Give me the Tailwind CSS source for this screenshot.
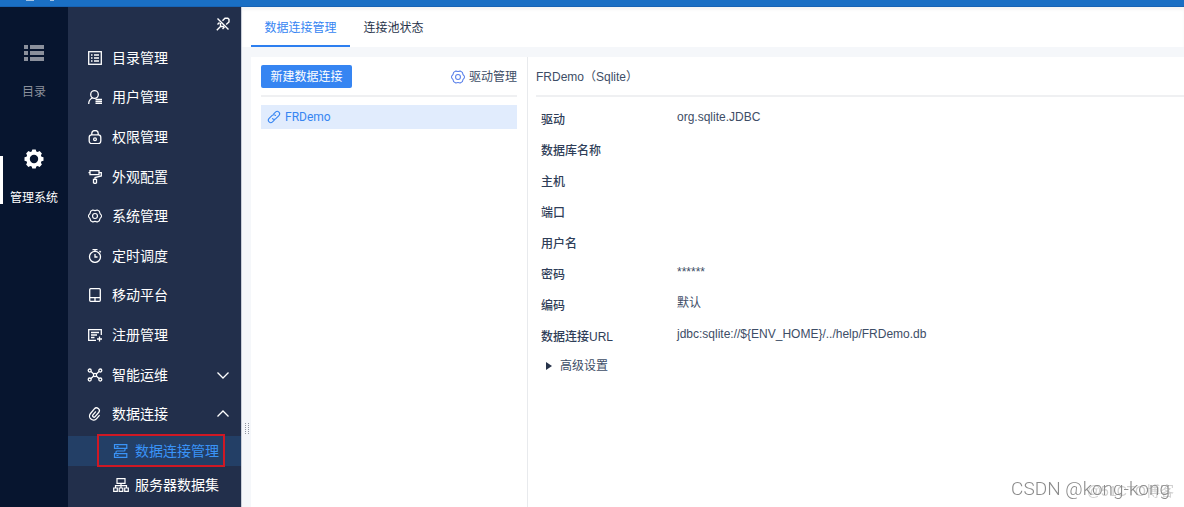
<!DOCTYPE html>
<html lang="zh-CN">
<head>
<meta charset="utf-8">
<title>数据连接管理</title>
<script src="https://cdn.jsdelivr.net/npm/@tailwindcss/browser@4"></script>
</head>
<body class="h-screen overflow-hidden flex flex-col bg-white font-['Liberation_Sans','Noto_Sans_CJK_SC',sans-serif] text-xs text-[#3d4d66]">
<svg class="hidden" aria-hidden="true">
  <symbol id="gear" viewBox="0 0 16 16"><path stroke-linejoin="round" d="M5.500 1.200Q8 2.400 10.500 1.200L13 2.700Q13.300 5.500 15.300 7v2Q13.300 10.500 13 13.300L10.500 14.800Q8 13.600 5.500 14.800L3 13.300Q2.700 10.500.7 9V7Q2.700 5.500 3 2.700z"/><circle cx="8" cy="8" r="2.800"/></symbol>
  <symbol id="clip" viewBox="0 0 14 14"><path transform="rotate(40 7 7)" stroke-linecap="round" d="M11.200 5.500v4a4 4 0 0 1-8 0V3.500a2.800 2.800 0 0 1 5.600 0V9a1.400 1.400 0 0 1-2.800 0V5"/></symbol>
</svg>
<header class="h-[7px] shrink-0 bg-[#1a6fc4] border-b border-[#1763b4] flex gap-2 pl-6"><span class="w-2 h-px ml-0.5 bg-white/60"></span><span class="w-1 h-px ml-2 bg-white/60"></span></header>
<div class="flex flex-1 min-h-0">
  <nav class="w-[68px] shrink-0 bg-[#07152f] flex flex-col" aria-label="主导航">
    <a href="#" class="flex flex-col items-center pt-9 h-[149px] text-[#8b909c]">
      <svg class="w-5 h-5" viewBox="0 0 20 20" fill="currentColor"><path d="M0 2h4v4H0zM6 2h14v4H6zM0 8h4v4H0zM6 8h14v4H6zM0 14h4v4H0zM6 14h14v4H6z"/></svg>
      <span class="mt-5 leading-[18px]">目录</span>
    </a>
    <a href="#" aria-current="page" class="flex flex-col items-center h-12 border-l-[3px] border-white pr-[3px] text-white">
      <svg class="w-5 h-5 -mt-[7px] shrink-0" viewBox="0 0 20 20" fill="currentColor" fill-rule="evenodd"><path d="M8.300.5h3.400l.6 2 1.400.6 1.900-1 2.300 2.300-1 1.900.6 1.400 2 .6v3.400l-2 .6-.6 1.400 1 1.900-2.300 2.300-1.900-1-1.400.6-.6 2H8.300l-.6-2-1.400-.6-1.900 1-2.300-2.300 1-1.900-.6-1.400-2-.6V8.300l2-.6.6-1.400-1-1.900L4.400 2.100l1.900 1 1.400-.6zM10 5.800a4.200 4.200 0 1 0 0 8.400 4.200 4.200 0 0 0 0-8.400z"/></svg>
      <span class="mt-5 leading-[18px] whitespace-nowrap">管理系统</span>
    </a>
  </nav>
  <aside class="w-[173px] shrink-0 bg-[#222f4b] text-white text-sm flex flex-col">
    <div class="h-[31px] shrink-0 flex justify-end pr-[11px] pt-2.5">
      <button aria-label="取消固定" class="w-3.5 h-3.5"><svg class="w-3.5 h-3.5" viewBox="0 0 14 14" fill="none" stroke="currentColor" stroke-width="1.400"><path d="M1.500 1.500l11 11M6.500 3.800L9 1.200h2.800l1.200 1.200v2.600L10.200 7.500M3.500 5.500L1.500 7.500M6.500 12l2-2M4 10L.8 13.200M4.500 6v3.500H8"/></svg></button>
    </div>
    <ul class="grid grid-rows-10 h-[396px] shrink-0 [&>li>a]:flex [&>li>a]:items-center [&>li>a]:h-full [&>li>a]:pl-5 [&>li>a]:pr-[11px] [&>li>a]:gap-[10px] [&_svg]:w-3.5 [&_svg]:h-3.5 [&_svg]:shrink-0 [&_svg]:fill-none [&_svg]:stroke-current [&_svg]:stroke-[1.300]">
      <li><a href="#"><svg viewBox="0 0 14 14"><rect x=".7" y=".7" width="12.600" height="12.600"/><path d="M3 4h1.500M6 4h5M3 7h1.500M6 7h5M3 10h1.500M6 10h5"/></svg>目录管理</a></li>
      <li><a href="#"><svg viewBox="0 0 14 14"><circle cx="6.500" cy="4.500" r="3.800"/><path d="M.7 14c0-3 1.300-5 3.800-6M7.500 9.500H14M7.500 11.500H14M7.500 13.500H14"/></svg>用户管理</a></li>
      <li><a href="#"><svg viewBox="0 0 14 14"><rect x="1.200" y="4.900" width="11.600" height="8.700" rx="2.500"/><path d="M3.800 5V3.200a3.200 2.700 0 0 1 6.400 0V5"/><circle cx="7" cy="9.300" r="1.400"/></svg>权限管理</a></li>
      <li><a href="#"><svg viewBox="0 0 14 14"><path d="M2 .7h9v4H2zM2 2.700H.5M11 2.700h2.300V6L7 7.500V9M5.500 9.300h3v3.500L7 13.600l-1.500-.8z"/></svg>外观配置</a></li>
      <li><a href="#"><svg><use href="#gear"/></svg>系统管理</a></li>
      <li><a href="#"><svg viewBox="0 0 14 14"><circle cx="7" cy="7.900" r="5.500"/><path d="M4.500.7h5M7 .7v2M7 5v3h2.500M11.500 2l1.300 1.300"/></svg>定时调度</a></li>
      <li><a href="#"><svg viewBox="0 0 14 14"><rect x="1.700" y=".7" width="10.600" height="12.600" rx="1"/><path d="M2 9.700h10M7 10v3"/></svg>移动平台</a></li>
      <li><a href="#"><svg viewBox="0 0 14 14"><path d="M13.300 7V1.700H.7v10.600H8M3 4.500h8M3 7h6M3 9.500h3.500M11.500 8.500v5M9 11h5"/></svg>注册管理</a></li>
      <li><a href="#"><svg class="overflow-visible" viewBox="0 0 14 14"><circle cx="1.700" cy="2.500" r="1.500"/><circle cx="12.300" cy="2.500" r="1.500"/><circle cx="1.700" cy="11.500" r="1.500"/><circle cx="12.300" cy="11.500" r="1.500"/><circle cx="7" cy="7" r="1.600"/><path d="M3 3.500L5.700 6M11 3.500L8.300 6M3 10.500L5.700 8M11 10.500L8.300 8"/></svg><span class="flex-1">智能运维</span><svg viewBox="0 0 14 14"><path d="M1.500 4.500L7 10l5.500-5.500"/></svg></a></li>
      <li><a href="#"><svg class="overflow-visible"><use href="#clip"/></svg><span class="flex-1">数据连接</span><svg viewBox="0 0 14 14"><path d="M1.500 9.500L7 4l5.500 5.500"/></svg></a></li>
    </ul>
    <ul class="flex flex-col gap-1 pt-0.5 [&_a]:flex [&_a]:items-center [&_a]:h-[30px] [&_a]:pl-[45px] [&_a]:gap-[6px] [&_svg]:w-4 [&_svg]:h-3.5 [&_svg]:shrink-0 [&_svg]:fill-none [&_svg]:stroke-current [&_svg]:stroke-[1.200]">
      <li class="relative bg-[#233f66] text-[#3a94f8]"><a href="#" aria-current="page"><svg viewBox="0 0 16 14"><path d="M1.500.7h12.300v3.700H1.500zM3.500 2.600h2M1.500 9.600h12.300v3.700H1.500zM3.500 11.500h2M12 4.500v1.500q0 1-1 1H4q-1 0-1 1v1.500"/></svg>数据连接管理</a>
        <span class="absolute left-[29px] -top-0.5 w-32 h-[33px] border-2 border-[#cf1824] pointer-events-none"></span></li>
      <li><a href="#"><svg viewBox="0 0 16 14"><path d="M4 .7h8v4.600H4zM8 5.300V10M2.500 10V7.700h11V10M.7 10h3.600v3.300H.7zM6.200 10h3.600v3.300H6.200zM11.700 10h3.600v3.300h-3.600z"/></svg>服务器数据集</a></li>
    </ul>
  </aside>
  <main class="flex-1 min-w-0 bg-[#f5f7fa] border-l border-[#c9ced8] flex flex-col">
    <div role="tablist" class="h-10 shrink-0 bg-white flex pl-[9px] shadow-[inset_0_3px_3px_#f5f5f5]">
      <button role="tab" aria-selected="true" class="w-[99px] border-b-2 border-[#2d7ff0] text-[#3685f2] pt-1">数据连接管理</button>
      <button role="tab" aria-selected="false" class="w-[87px] text-[#27334a] pt-0.5">连接池状态</button>
    </div>
    <div class="flex flex-1 min-h-0 mt-2.5">
      <div class="w-[9px] shrink-0 relative" aria-hidden="true"><svg class="absolute left-0.5 top-[366px] w-1.5 h-3" viewBox="0 0 6 12" stroke="#8f95a1" stroke-width="1" stroke-dasharray="1 1" shape-rendering="crispEdges"><path d="M1.500 0v12M4.500 0v12"/></svg></div>
      <section class="w-[277px] shrink-0 bg-white border-r border-[#e8eaed] px-2.5 pt-2">
        <div class="h-8 flex items-start justify-between border-b-2 border-[#eff0f2]">
          <button class="h-[23px] w-[91px] rounded-xs bg-[#3685f2] text-white">新建数据连接</button>
          <button class="h-[23px] flex items-center gap-1 text-[#3d4d66]"><svg class="w-3.5 h-3.5 fill-none stroke-[#5a80ea] stroke-[1.200]"><use href="#gear"/></svg>驱动管理</button>
        </div>
        <a href="#" class="mt-2 h-6 flex items-center gap-1 pl-1.5 bg-[#e1ecfd] text-[#3685f2] font-[Roboto]"><svg class="w-3.5 h-3.5" viewBox="0 0 14 14" fill="none" stroke="currentColor" stroke-width="1.100" stroke-linecap="round"><path transform="rotate(45 7 7)" d="M7 9.200a2.400 2.400 0 0 0 2.400-2.400V2.500a2.400 2.400 0 0 0-4.800 0V5M7 4.800a2.400 2.400 0 0 0-2.400 2.400v4.300a2.400 2.400 0 0 0 4.800 0V9"/></svg>FRDemo</a>
      </section>
      <section class="flex-1 min-w-0 bg-white pl-2">
        <h1 class="h-10 leading-10 border-b-2 border-[#eff0f2]">FRDemo（Sqlite）</h1>
        <dl class="grid grid-cols-[136px_1fr] auto-rows-[31px] pl-[5px] pt-[7px] [&>dt]:leading-8 [&>dt]:font-medium [&>dt]:text-[#2f3e58] [&>dd]:leading-[26px]">
          <dt>驱动</dt><dd>org.sqlite.JDBC</dd>
          <dt>数据库名称</dt><dd></dd>
          <dt>主机</dt><dd></dd>
          <dt>端口</dt><dd></dd>
          <dt>用户名</dt><dd></dd>
          <dt>密码</dt><dd>******</dd>
          <dt>编码</dt><dd>默认</dd>
          <dt>数据连接URL</dt><dd>jdbc:sqlite://${ENV_HOME}/../help/FRDemo.db</dd>
        </dl>
        <button aria-expanded="false" class="flex items-center gap-2 h-7 pl-2.5"><svg class="w-1.5 h-2 fill-[#27334a]" viewBox="0 0 6 8"><path d="M0 0l6 4-6 4z"/></svg>高级设置</button>
      </section>
    </div>
  </main>
</div>
<div class="fixed right-2.5 bottom-1.5 text-sm text-[#d0d0d0] whitespace-nowrap">@51CTO博客</div>
<div class="fixed right-3.5 bottom-1.5 text-[19px] leading-6 text-[#8c8c8c] whitespace-nowrap font-[Roboto] font-light">CSDN @kong-kong</div>
</body>
</html>
